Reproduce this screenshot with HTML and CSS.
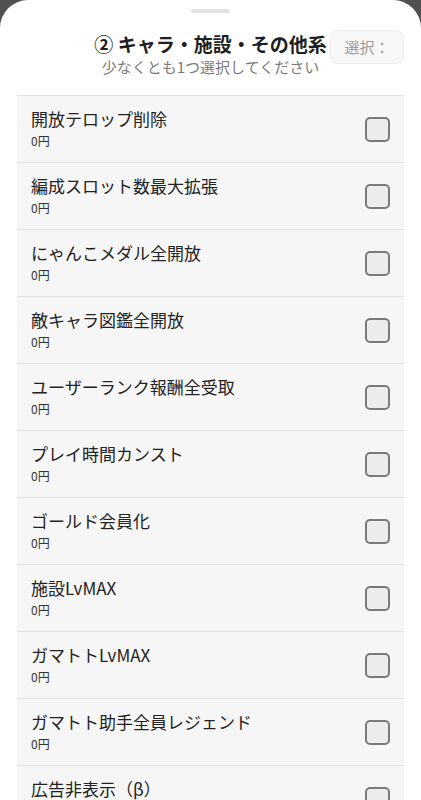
FILE: index.html
```html
<!DOCTYPE html>
<html lang="ja">
<head>
<meta charset="utf-8">
<link rel="stylesheet" href="styles.css">
</head>
<body>
<div class="sheet">
  <div class="handle"></div>
  <div class="header">
    <div class="title">② キャラ・施設・その他系</div>
    <div class="subtitle">少なくとも1つ選択してください</div>
  </div>
  <div class="badge">選択：</div>
  <div class="list">
    <div class="row"><div class="info"><div class="name">開放テロップ削除</div><div class="price">0円</div></div><div class="check"></div></div>
    <div class="row"><div class="info"><div class="name">編成スロット数最大拡張</div><div class="price">0円</div></div><div class="check"></div></div>
    <div class="row"><div class="info"><div class="name">にゃんこメダル全開放</div><div class="price">0円</div></div><div class="check"></div></div>
    <div class="row"><div class="info"><div class="name">敵キャラ図鑑全開放</div><div class="price">0円</div></div><div class="check"></div></div>
    <div class="row"><div class="info"><div class="name">ユーザーランク報酬全受取</div><div class="price">0円</div></div><div class="check"></div></div>
    <div class="row"><div class="info"><div class="name">プレイ時間カンスト</div><div class="price">0円</div></div><div class="check"></div></div>
    <div class="row"><div class="info"><div class="name">ゴールド会員化</div><div class="price">0円</div></div><div class="check"></div></div>
    <div class="row"><div class="info"><div class="name">施設LvMAX</div><div class="price">0円</div></div><div class="check"></div></div>
    <div class="row"><div class="info"><div class="name">ガマトトLvMAX</div><div class="price">0円</div></div><div class="check"></div></div>
    <div class="row"><div class="info"><div class="name">ガマトト助手全員レジェンド</div><div class="price">0円</div></div><div class="check"></div></div>
    <div class="row"><div class="info"><div class="name">広告非表示（β）</div><div class="price">0円</div></div><div class="check"></div></div>
  </div>
</div>
</body>
</html>
```
FILE: styles.css
```css
html, body {
  margin: 0;
  padding: 0;
  height: 800px;
  overflow: hidden;
  background: #505050;
  font-family: "Noto Sans CJK JP", "Noto Sans", sans-serif;
}
.sheet {
  position: relative;
  background: #ffffff;
  border-radius: 28px 28px 0 0;
  min-height: 800px;
  padding-top: 9px;
  box-sizing: border-box;
}
.handle {
  width: 39px;
  height: 4px;
  border-radius: 2px;
  background: #e2e2e2;
  margin: 0 auto;
}
.header {
  margin-top: 18px;
  text-align: center;
}
.title {
  font-size: 19px;
  font-weight: 700;
  line-height: 26px;
  color: #1f1f1f;
}
.subtitle {
  font-size: 15px;
  line-height: 20px;
  color: #7a7a7a;
}
.badge {
  position: absolute;
  top: 30px;
  right: 17px;
  width: 72px;
  height: 32px;
  border: 1px solid #ededed;
  border-radius: 8px;
  background: #f7f7f8;
  color: #9a9a9a;
  font-size: 15px;
  line-height: 32px;
  text-align: center;
}
.list {
  margin: 18px 17px 0;
  background: #f6f6f6;
  border-top: 1px solid #e2e2e2;
}
.row {
  height: 66px;
  border-bottom: 1px solid #e2e2e2;
  display: flex;
  align-items: center;
  justify-content: space-between;
  padding: 0 14px;
}
.name {
  font-size: 17px;
  line-height: 22px;
  color: #222;
}
.price {
  margin-top: 2px;
  font-size: 12px;
  line-height: 18px;
  color: #333;
}
.check {
  width: 21px;
  height: 21px;
  border: 2px solid #7a7a7a;
  border-radius: 5px;
  background: #ececec;
}
```
